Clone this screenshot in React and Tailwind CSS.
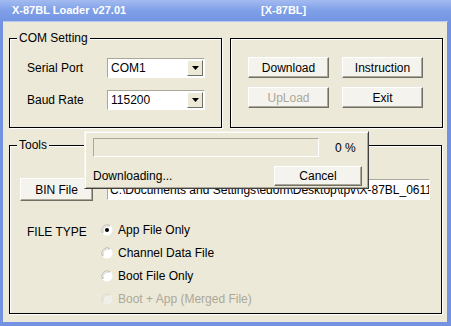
import React from "react";

function Btn({ children, className = "", disabled = false }) {
  return (
    <div
      className={
        "flex items-center justify-center bg-[#f4f3ee] border border-t-white border-l-white border-r-[#716f64] border-b-[#716f64] shadow-[inset_-1px_-1px_0_#aca899] text-[12px] leading-none " +
        (disabled ? "text-[#aca899] " : "text-black ") +
        className
      }
    >
      {children}
    </div>
  );
}

function Combo({ value }) {
  return (
    <div className="w-[98px] h-[20px] flex items-center bg-white border border-t-[#aca899] border-l-[#aca899] border-r-white border-b-white">
      <span className="flex-1 pl-[3px] text-[12px] leading-none text-black">{value}</span>
      <div className="w-[16px] h-[16px] mr-[1px] flex items-center justify-center bg-[#ece9d8] border border-t-white border-l-white border-r-[#716f64] border-b-[#716f64]">
        <svg width="7" height="4" viewBox="0 0 7 4">
          <path d="M0 0H7L3.5 4Z" fill="#000" />
        </svg>
      </div>
    </div>
  );
}

function Group({ title, className = "", children }) {
  return (
    <div className={"relative border border-black shadow-[1px_1px_0_#fff,inset_1px_1px_0_#fff] " + className}>
      {title && (
        <span className="absolute -top-[8px] left-[7px] px-[2px] bg-[#ece9d8] text-[12px] leading-[14px] text-black">
          {title}
        </span>
      )}
      {children}
    </div>
  );
}

function Radio({ checked, disabled, label }) {
  return (
    <div className="h-[23px] flex items-center">
      <svg width="12" height="12" viewBox="0 0 12 12" className="shrink-0">
        <circle cx="6" cy="6" r="5.5" fill={disabled ? "#f0efe8" : "#fff"} />
        <path d="M1.5 9 A5.5 5.5 0 0 1 9 1.5" stroke={disabled ? "#d8d5c8" : "#b8b5a8"} strokeWidth="1" fill="none" />
        <path d="M2.5 8.5 A4.5 4.5 0 0 1 8.5 2.5" stroke={disabled ? "#e4e1d6" : "#d8d6cc"} strokeWidth="1" fill="none" />
        {checked && <circle cx="6" cy="6" r="2" fill="#000" />}
      </svg>
      <span className={"ml-[5px] text-[12px] leading-none " + (disabled ? "text-[#aca899]" : "text-black")}>
        {label}
      </span>
    </div>
  );
}

export default function App() {
  return (
    <div className="relative w-[451px] h-[326px] bg-[#7393e2] flex flex-col font-['Liberation_Sans',Arial,sans-serif] overflow-hidden">
      {/* title bar */}
      <div className="h-[21px] flex items-center pl-[12px] bg-gradient-to-b from-[#a3bbf0] via-[#7f9fe7] to-[#7495e3] text-white font-bold text-[11px]">
        <span className="w-[249px]">X-87BL Loader v27.01</span>
        <span>[X-87BL]</span>
      </div>
      <div className="h-[1px] bg-[#b7c9f2] mx-[3px]" />
      {/* client area */}
      <div className="flex-1 ml-[3px] mr-[4px] mb-[4px] bg-[#ece9d8] pl-[6px] pt-[16px]">
        <div className="flex gap-[8px]">
          <Group title="COM Setting" className="w-[213px] h-[90px]">
            <div className="flex flex-col gap-[12px] pt-[19px] pl-[17px]">
              <div className="flex items-center h-[20px]">
                <span className="w-[80px] text-[12px] leading-none text-black">Serial Port</span>
                <Combo value="COM1" />
              </div>
              <div className="flex items-center h-[20px]">
                <span className="w-[80px] text-[12px] leading-none text-black">Baud Rate</span>
                <Combo value="115200" />
              </div>
            </div>
          </Group>
          <Group className="w-[213px] h-[90px]">
            <div className="grid grid-cols-[81px_81px] gap-x-[13px] gap-y-[9px] pt-[18px] pl-[17px]">
              <Btn className="h-[21px]">Download</Btn>
              <Btn className="h-[21px]">Instruction</Btn>
              <Btn className="h-[21px]" disabled>UpLoad</Btn>
              <Btn className="h-[21px]">Exit</Btn>
            </div>
          </Group>
        </div>
        <Group title="Tools" className="mt-[17px] w-[433px] h-[169px]">
          <div className="pt-[32px] pl-[10px] flex items-center">
            <Btn className="w-[73px] h-[23px]">BIN File</Btn>
            <div className="ml-[14px] w-[323px] h-[21px] bg-white border border-t-[#aca899] border-l-[#aca899] border-r-white border-b-white overflow-hidden flex items-center">
              <span className="pl-[2px] whitespace-nowrap text-[12px] leading-none text-black">
                C:\Documents and Settings\edom\Desktop\tpv\X-87BL_0611.bin
              </span>
            </div>
          </div>
          <div className="mt-[17px] pl-[17px] flex">
            <span className="w-[74px] h-[23px] flex items-center pt-[4px] text-[12px] leading-none text-black">FILE TYPE</span>
            <div className="flex flex-col">
              <Radio checked label="App File Only" />
              <Radio label="Channel Data File" />
              <Radio label="Boot File Only" />
              <Radio disabled label="Boot + App (Merged File)" />
            </div>
          </div>
        </Group>
      </div>

      {/* progress popup */}
      <div className="absolute left-[84px] top-[131px] w-[285px] h-[58px] bg-[#ece9d8] border border-t-[#f4f3ee] border-l-[#f4f3ee] border-r-[#404040] border-b-[#404040] shadow-[inset_1px_1px_0_#fff,inset_-1px_-1px_0_#aca899]">
        <div className="pl-[8px] pt-[6px] flex flex-col">
          <div className="flex items-center">
            <div className="w-[226px] h-[19px] border border-t-[#aca899] border-l-[#aca899] border-r-white border-b-white" />
            <span className="ml-[16px] text-[12px] leading-none text-black">0 %</span>
          </div>
          <div className="mt-[9px] flex items-center">
            <span className="w-[181px] text-[12px] leading-none text-black">Downloading...</span>
            <Btn className="w-[88px] h-[20px]">Cancel</Btn>
          </div>
        </div>
      </div>
    </div>
  );
}
